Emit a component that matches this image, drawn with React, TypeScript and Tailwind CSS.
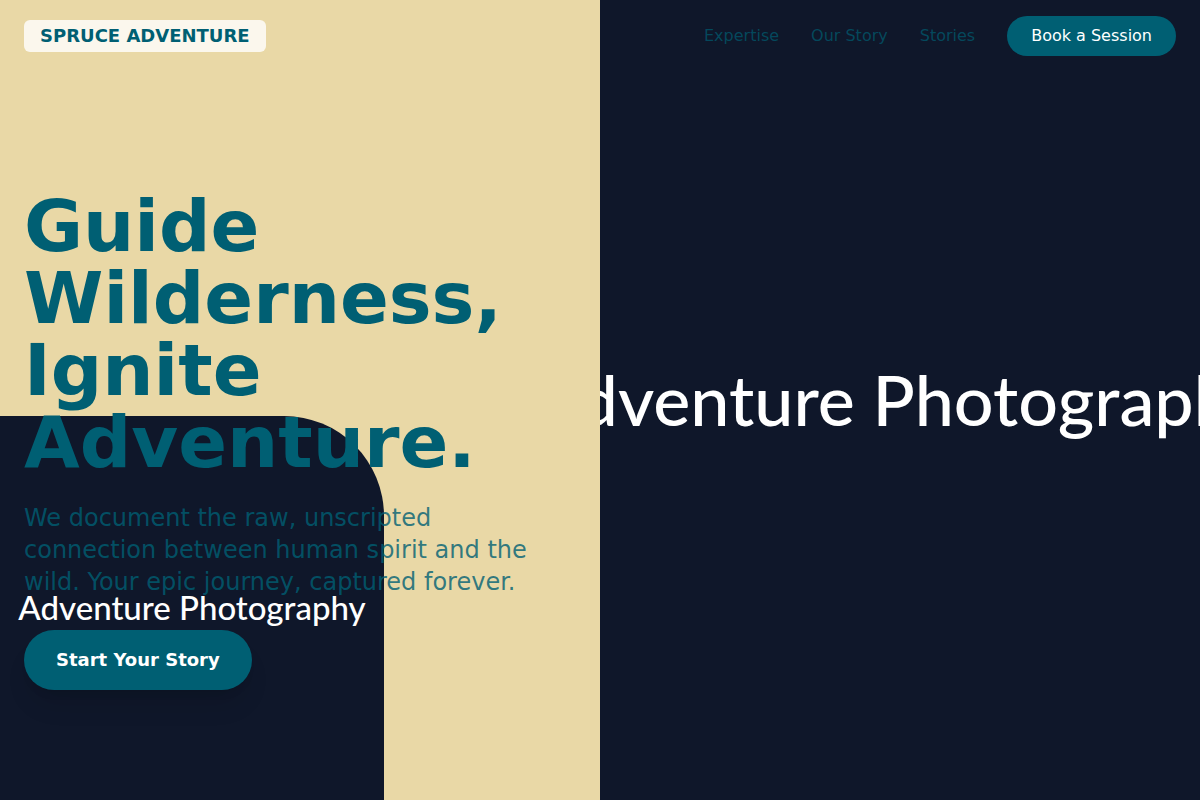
import React from "react";

export default function App() {
  return (
    <div
      className="relative w-full h-[800px] overflow-hidden flex bg-[#0f172a]"
      style={{ fontFamily: '"DejaVu Sans", sans-serif' }}
    >
      {/* Left column */}
      <section className="relative z-10 w-[600px] h-full bg-[#e9d8a6] flex flex-col justify-center pt-[80px] px-6">
        {/* decorative dark image block */}
        <div className="absolute left-0 bottom-0 w-[384px] h-[384px] rounded-tr-[100px] bg-[#0f172a]" />
        <div className="relative z-10">
          <h1 className="text-[72px] leading-[72px] font-bold text-[#005f73]">
            Guide
            <br />
            Wilderness,
            <br />
            Ignite
            <br />
            Adventure.
          </h1>
          <p className="mt-6 max-w-lg text-2xl leading-8 text-[#005f73]/80">
            We document the raw, unscripted connection between human spirit and the wild. Your epic journey, captured forever.
          </p>
          <button className="mt-8 rounded-full bg-[#005f73] px-8 py-4 text-lg font-bold leading-7 text-white shadow-xl">
            Start Your Story
          </button>
        </div>
        <div className="absolute left-0 bottom-0 z-20 w-[384px] h-[384px] flex items-center justify-center">
          <span
            className="text-[33px] font-medium leading-tight text-white whitespace-nowrap"
            style={{ fontFamily: 'Lato, sans-serif' }}
          >
            Adventure Photography
          </span>
        </div>
      </section>

      {/* Right column image */}
      <section className="relative z-0 w-[600px] h-full bg-[#0f172a] flex items-center justify-center">
        <span
          className="text-[70px] font-medium leading-tight text-white whitespace-nowrap"
          style={{ fontFamily: 'Lato, sans-serif' }}
        >
          Adventure Photography
        </span>
      </section>

      {/* Header */}
      <header className="absolute top-0 left-0 right-0 z-30 flex items-center justify-between px-6 py-4">
        <div className="rounded-md bg-white/80 px-4 py-0.5 text-lg font-bold leading-7 text-[#005f73]">
          SPRUCE ADVENTURE
        </div>
        <nav className="flex items-center gap-8">
          <a className="text-base text-[#005f73]/70">Expertise</a>
          <a className="text-base text-[#005f73]/70">Our Story</a>
          <a className="text-base text-[#005f73]/70">Stories</a>
          <button className="rounded-full bg-[#005f73] px-6 py-2 text-base leading-6 text-white">
            Book a Session
          </button>
        </nav>
      </header>
    </div>
  );
}
